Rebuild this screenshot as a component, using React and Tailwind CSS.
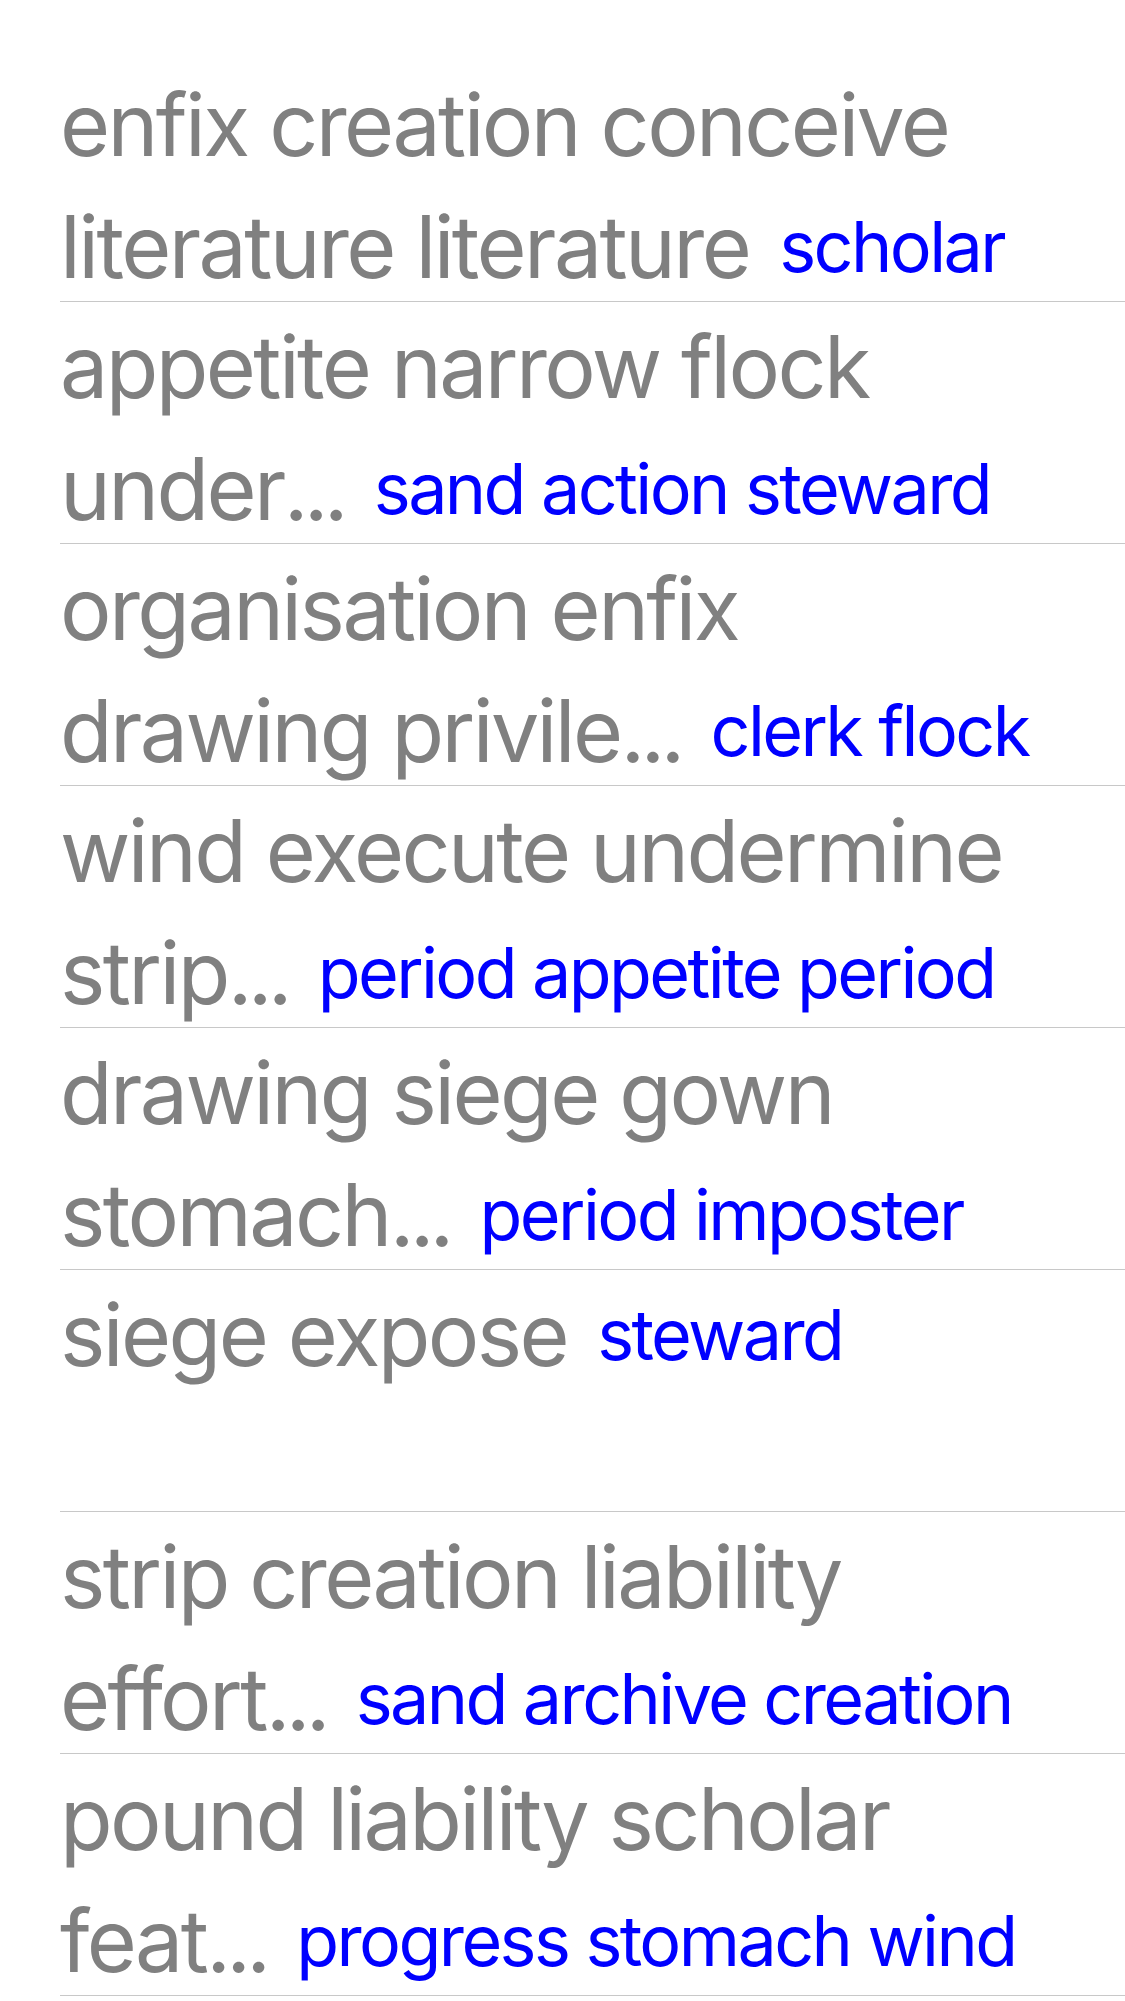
const rows = [
  { lines: ['enfix creation conceive', 'literature literature'], tags: 'scholar' },
  { lines: ['appetite narrow flock', 'under...'], tags: 'sand action steward' },
  { lines: ['organisation enfix', 'drawing privile...'], tags: 'clerk flock' },
  { lines: ['wind execute undermine', 'strip...'], tags: 'period appetite period' },
  { lines: ['drawing siege gown', 'stomach...'], tags: 'period imposter' },
  { lines: ['siege expose'], tags: 'steward' },
  { lines: ['strip creation liability', 'effort...'], tags: 'sand archive creation' },
  { lines: ['pound liability scholar', 'feat...'], tags: 'progress stomach wind' },
];

// truncated lines end in "..." which sits tighter than the default periods
const Line = ({ text }) => {
  if (!text.endsWith('...')) return text;
  return (
    <>
      {text.slice(0, -3)}
      <span className="tracking-[-4.8px]">...</span>
    </>
  );
};

const Row = ({ lines, tags }) => (
  <div className="ml-[60px] h-[242px] border-b border-[#c8c8c8] pt-[4px] text-[86px] leading-[122px] tracking-[-2.6px] text-[#808080]">
    {lines.map((line, i) => (
      <div key={i} className="whitespace-nowrap">
        <Line text={line} />
        {i === lines.length - 1 ? (
          <span className="ml-[30px] text-[70px] tracking-[-2.6px] text-[#0000ff] align-[6px]">{tags}</span>
        ) : null}
      </div>
    ))}
  </div>
);

export default function App() {
  return (
    <div className="min-h-screen bg-white pt-[60px] font-['Inter',sans-serif]">
      {rows.map((r, i) => (
        <Row key={i} {...r} />
      ))}
    </div>
  );
}
